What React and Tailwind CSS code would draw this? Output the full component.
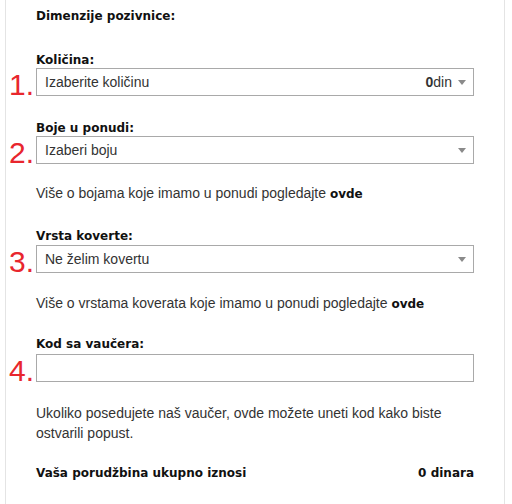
import { useState } from 'react'

const bold = "font-['DejaVu_Sans',Verdana,sans-serif] font-bold"
const arial = "font-['Liberation_Sans',Arial,sans-serif]"

function Num({ n }) {
  return (
    <span className={`absolute right-full mr-[2px] bottom-[-4px] ${arial} text-[30px] leading-none text-[#e8262d]`}>
      {n}.
    </span>
  )
}

function Caret() {
  return (
    <svg width="8" height="5" viewBox="0 0 8 5" className="shrink-0">
      <path d="M0 0h8L4 5z" fill="#8a8a8a" />
    </svg>
  )
}

function SelectBox({ n, value, price }) {
  return (
    <div className="relative">
      <Num n={n} />
      <div className="h-[28px] border border-[#a9a9a9] bg-white flex items-center pl-[8px] pr-[7px]">
        <span className={`${arial} text-[14px] text-[#333] flex-1`}>{value}</span>
        {price !== undefined && (
          <span className={`${arial} text-[14px] text-[#333] mr-[6px]`}>
            <b className="font-bold">{price}</b>din
          </span>
        )}
        <Caret />
      </div>
    </div>
  )
}

function Label({ children, className = '' }) {
  return <div className={`${bold} text-[12px] text-[#111] leading-[14px] ${className}`}>{children}</div>
}

function Note({ children, className = '' }) {
  return <p className={`${arial} text-[14px] text-[#333] leading-[20px] ${className}`}>{children}</p>
}

export default function App() {
  const [code, setCode] = useState('')
  return (
    <div className="w-[512px] h-[504px] bg-white overflow-hidden">
      <div className="ml-[5px] w-[500px] h-full border-l border-r border-[#e4e4e4] pl-[30px] pr-[30px] pt-[9px]">
        <Label>Dimenzije pozivnice:</Label>

        <Label className="mt-[30px] mb-[1px]">Količina:</Label>
        <SelectBox n={1} value="Izaberite količinu" price={0} />

        <Label className="mt-[25px] mb-[1px]">Boje u ponudi:</Label>
        <SelectBox n={2} value="Izaberi boju" />

        <Note className="mt-[19px]">
          Više o bojama koje imamo u ponudi pogledajte <b className={`${bold} text-[12px] text-[#111]`}>ovde</b>
        </Note>

        <Label className="mt-[25px] mb-[2px]">Vrsta koverte:</Label>
        <SelectBox n={3} value="Ne želim kovertu" />

        <Note className="mt-[20px]">
          Više o vrstama koverata koje imamo u ponudi pogledajte <b className={`${bold} text-[12px] text-[#111]`}>ovde</b>
        </Note>

        <Label className="mt-[23px] mb-[3px]">Kod sa vaučera:</Label>
        <div className="relative">
          <Num n={4} />
          <input
            value={code}
            onChange={(e) => setCode(e.target.value)}
            className={`block w-full h-[28px] border border-[#a9a9a9] bg-white px-[8px] ${arial} text-[14px] outline-none`}
          />
        </div>

        <Note className="mt-[21px]">
          Ukoliko posedujete naš vaučer, ovde možete uneti kod kako biste ostvarili popust.
        </Note>

        <div className="mt-[23px] flex justify-between">
          <Label>Vaša porudžbina ukupno iznosi</Label>
          <Label>0 dinara</Label>
        </div>
      </div>
    </div>
  )
}
